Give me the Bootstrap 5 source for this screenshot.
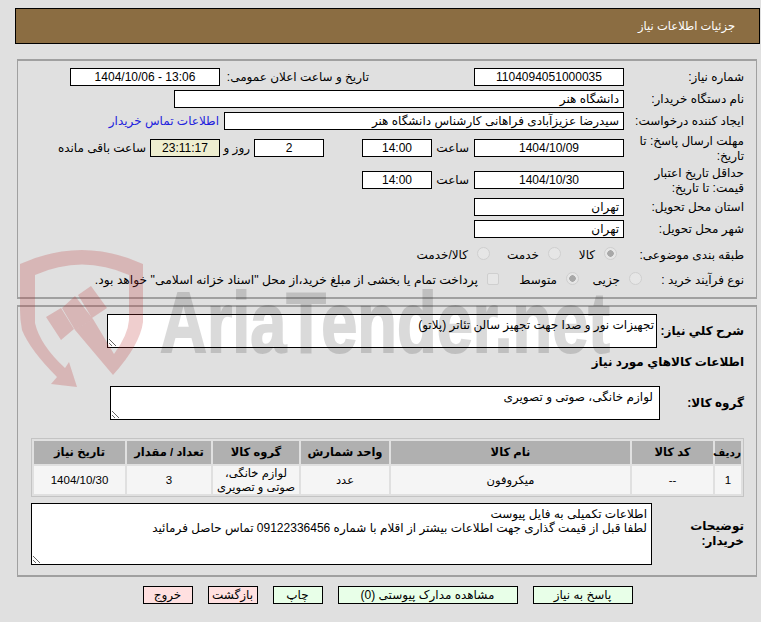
<!DOCTYPE html>
<html lang="fa" dir="rtl">
<head>
<meta charset="utf-8">
<title>جزئیات اطلاعات نیاز</title>
<link href="https://cdn.jsdelivr.net/npm/bootstrap@5.3.0/dist/css/bootstrap.min.css" rel="stylesheet">
<style>
html,body{height:622px;overflow:hidden}
body{background:#e0e0e0;font-family:"Liberation Sans","DejaVu Sans",sans-serif;font-size:12px;line-height:15px;color:#000;position:relative}
.page-wrap{padding:8px 1px 0 15px}
.head-bar{height:36px;background:#8b6d42;border:1px solid #000;color:#fff;padding-right:24px;font-size:11.5px}
.sect{border:1px solid #a0a0a0;border-bottom-width:2px;border-top-width:2px;margin:0 3px 0 2px}
.sect-a{margin-top:15px;height:240px;padding:5px 12px 0 0}
.sect-b{margin-top:6px;height:272px;padding:7px 12px 0 0}
.slot{height:22px}
.slot-t{height:32px}
.slot-low{margin-top:3px}
.lbl{width:120px;flex:none;line-height:15px}
.lbl-two{padding-top:2px}
.lbl-n{width:102px;flex:none}
.fbox.form-control{height:18px;border:1px solid #000;border-radius:0;background:#fff;padding:0 4px;font-size:12px;line-height:16px;color:#000;flex:none;text-align:center}
.fbox.txt-r{text-align:right}
.w150{width:150px}.w70{width:70px}.w450{width:450px}.w400{width:400px}
.fbox.timer{background:#eeeed0}
.t37{width:42px;padding-right:5px;flex:none}
.pub-lbl{width:149px;flex:none;margin-right:105px;white-space:nowrap}
.s4{margin-right:4px}.s38{margin-right:38px}
.t30{width:30px;flex:none;white-space:nowrap}
.opt-i{display:flex;align-items:center;flex:none;white-space:nowrap}
.i56{width:56px;margin-right:7px}.i71{width:71px}
.i63{width:63px}.i80{width:80px}
.opt{margin:-3px 0 0;width:13px;height:13px;flex:none;background-color:#e6e6e6;border:1px solid #cfcfcf;appearance:none;border-radius:50%;display:block;opacity:1}
.opt.on{background:radial-gradient(circle,#a8a8a8 0 3px,#e6e6e6 3.5px)}
.opt.sq{border-radius:2px;width:12px;height:12px}
.opt-t{margin-right:9px}
.wide-note{font-size:12.3px}
.bold{font-weight:700}
.head-line{margin-top:7px}
.lbl-b{width:87px;flex:none;font-weight:700}
.tarea.form-control{border:1px solid #000;border-radius:0;background:#fff;padding:3px 2px;font-size:12px;line-height:15px;color:#000;min-height:0;flex:none;overflow:hidden;resize:both}
.tarea.form-control:disabled{background:#fff;opacity:1}
.ta1{width:550px;height:34px}
.tarea.form-control.ta2{width:550px;height:34px;margin-right:-3px;padding:3px 6px}
.tarea.form-control.ta3{width:621px;height:62px;margin-right:5px;padding:3px 4px;line-height:14px}
.info-row{margin-top:6px}
.grid-t{border-collapse:separate;border-spacing:2px;border:1px solid #c4c4c4;width:713px;table-layout:fixed;margin:18px 0 0}
.grid-t th{background:#b0b0b0;font-weight:700;height:23px;text-align:center;padding:0;font-size:11.5px}
.grid-t th.tiny{font-size:10.5px}
.grid-t td{background:#f5f5f5;height:28px;text-align:center;padding:0;font-size:11.5px;line-height:14px}
.c26{width:26px}.c81{width:81px}.c239{width:239px}.c88{width:88px}.c86{width:86px}.c84{width:84px}.c91{width:91px}
.foot{padding:9px 0 0;gap:15px}
.act.btn{height:18px;border:1px solid #000;border-radius:0;padding:0;font-size:12px;line-height:16px;color:#000;--bs-btn-hover-color:#000}
.go{background:#e8ffe8}.stop{background:#ffe0e0}
.w100{width:100px}.w180{width:180px}.w50{width:50px}
.mark-layer{position:absolute;left:0;top:0;width:761px;height:622px;pointer-events:none}
.mark-word{font-family:"Liberation Sans",sans-serif;font-weight:700;font-size:86px;fill:#000;stroke:#000;stroke-width:2px;opacity:.14}
.link-c{color:#2222dd;text-decoration:none;margin-right:5px}
</style>
</head>
<body>
<div class="page-wrap">
  <div class="head-bar d-flex align-items-center">جزئیات اطلاعات نیاز</div>

  <div class="sect sect-a">
    <div class="slot d-flex align-items-center"><div class="lbl">شماره نیاز:</div><div class="fbox form-control w150">1104094051000035</div><div class="pub-lbl">تاریخ و ساعت اعلان عمومی:</div><div class="fbox form-control w150" dir="ltr">1404/10/06 - 13:06</div></div>
    <div class="slot d-flex align-items-center"><div class="lbl">نام دستگاه خریدار:</div><div class="fbox form-control txt-r w450">دانشگاه هنر</div></div>
    <div class="slot d-flex align-items-center"><div class="lbl">ایجاد کننده درخواست:</div><div class="fbox form-control txt-r w400">سیدرضا عزیزآبادی فراهانی کارشناس دانشگاه هنر</div><a class="link-c" href="#">اطلاعات تماس خریدار</a></div>
    <div class="slot-t d-flex align-items-center"><div class="lbl lbl-two">مهلت ارسال پاسخ: تا تاریخ:</div><div class="fbox form-control w150">1404/10/09</div><div class="t37">ساعت</div><div class="fbox form-control w70">14:00</div><div class="fbox form-control w70 s38">2</div><div class="t30 s4">روز و</div><div class="fbox form-control timer w70">23:11:17</div><div class="s4">ساعت باقی مانده</div></div>
    <div class="slot-t d-flex align-items-center"><div class="lbl lbl-two">حداقل تاریخ اعتبار قیمت: تا تاریخ:</div><div class="fbox form-control w150">1404/10/30</div><div class="t37">ساعت</div><div class="fbox form-control w70">14:00</div></div>
    <div class="slot d-flex align-items-center"><div class="lbl">استان محل تحویل:</div><div class="fbox form-control txt-r w150">تهران</div></div>
    <div class="slot d-flex align-items-center"><div class="lbl">شهر محل تحویل:</div><div class="fbox form-control txt-r w150">تهران</div></div>
    <div class="slot d-flex align-items-center mt-1"><div class="lbl">طبقه بندی موضوعی:</div>
      <div class="opt-i i56"><input class="opt on" type="radio" disabled checked aria-label="کالا"><span class="opt-t">کالا</span></div>
      <div class="opt-i i71"><input class="opt" type="radio" disabled aria-label="خدمت"><span class="opt-t">خدمت</span></div>
      <div class="opt-i"><input class="opt" type="radio" disabled aria-label="کالا/خدمت"><span class="opt-t">کالا/خدمت</span></div>
    </div>
    <div class="slot slot-low d-flex align-items-center"><div class="lbl-n">نوع فرآیند خرید :</div>
      <div class="opt-i i63"><input class="opt" type="radio" disabled aria-label="جزیی"><span class="opt-t">جزیی</span></div>
      <div class="opt-i i80"><input class="opt on" type="radio" disabled checked aria-label="متوسط"><span class="opt-t">متوسط</span></div>
      <div class="opt-i"><input class="opt sq" type="checkbox" disabled aria-label="پرداخت"><span class="opt-t wide-note">پرداخت تمام یا بخشی از مبلغ خرید،از محل "اسناد خزانه اسلامی" خواهد بود.</span></div>
    </div>
  </div>

  <div class="sect sect-b">
    <div class="d-flex align-items-center"><div class="lbl-b">شرح کلي نياز:</div><textarea class="tarea form-control ta1" disabled>تجهیزات نور و صدا جهت تجهیز سالن تئاتر (پلاتو)</textarea></div>
    <div class="bold head-line">اطلاعات کالاهاي مورد نياز</div>
    <div class="d-flex align-items-center mt-3"><div class="lbl-b">گروه کالا:</div><textarea class="tarea form-control ta2" disabled>لوازم خانگی، صوتی و تصویری</textarea></div>
    <table class="grid-t">
      <colgroup><col class="c26"><col class="c81"><col class="c239"><col class="c88"><col class="c86"><col class="c84"><col class="c91"></colgroup>
      <thead><tr><th class="tiny">ردیف</th><th>کد کالا</th><th>نام کالا</th><th>واحد شمارش</th><th>گروه کالا</th><th>تعداد / مقدار</th><th>تاریخ نیاز</th></tr></thead>
      <tbody><tr><td>1</td><td>--</td><td>میکروفون</td><td>عدد</td><td>لوازم خانگی، صوتی و تصویری</td><td>3</td><td>1404/10/30</td></tr></tbody>
    </table>
    <div class="d-flex align-items-center info-row"><div class="lbl-b">توضیحات خریدار:</div><textarea class="tarea form-control ta3" disabled>اطلاعات تکمیلی به فایل پیوست
لطفا قبل از قیمت گذاری جهت اطلاعات بیشتر از اقلام با شماره 09122336456 تماس حاصل فرمائید</textarea></div>
  </div>

  <div class="foot d-flex justify-content-center">
    <button class="act btn go w100" type="button">پاسخ به نیاز</button>
    <button class="act btn go w180" type="button">مشاهده مدارک پیوستی (0)</button>
    <button class="act btn go w50" type="button">چاپ</button>
    <button class="act btn stop w50" type="button">بازگشت</button>
    <button class="act btn stop w50" type="button">خروج</button>
  </div>
</div>

<svg class="mark-layer" viewBox="0 0 761 622" aria-hidden="true">
  <path fill="rgba(190,50,50,.24)" d="M20,264 Q82,236 143,264 L143,322 Q140,345 113,375 L75,330 L93,319 L114,354 Q128,335 129,320 L129,275 Q82,254 35,275 L35,323 Q40,345 65,368 L69,362 L77,387 L51,384 L57,377 Q30,350 22,330 Q20,320 20,310 Z"/>
  <path fill="rgba(190,50,50,.24)" d="M46,317 L61,308 L74,329 L61,340 Z M62,308 L75,296 L93,319 L75,330 Z M78,295 L91,286 L107,308 L92,318 Z"/>
  <text class="mark-word" x="160" y="352" direction="ltr" textLength="450" lengthAdjust="spacingAndGlyphs">AriaTender.net</text>
</svg>
<script src="https://cdn.jsdelivr.net/npm/bootstrap@5.3.0/dist/js/bootstrap.bundle.min.js"></script>
</body>
</html>
